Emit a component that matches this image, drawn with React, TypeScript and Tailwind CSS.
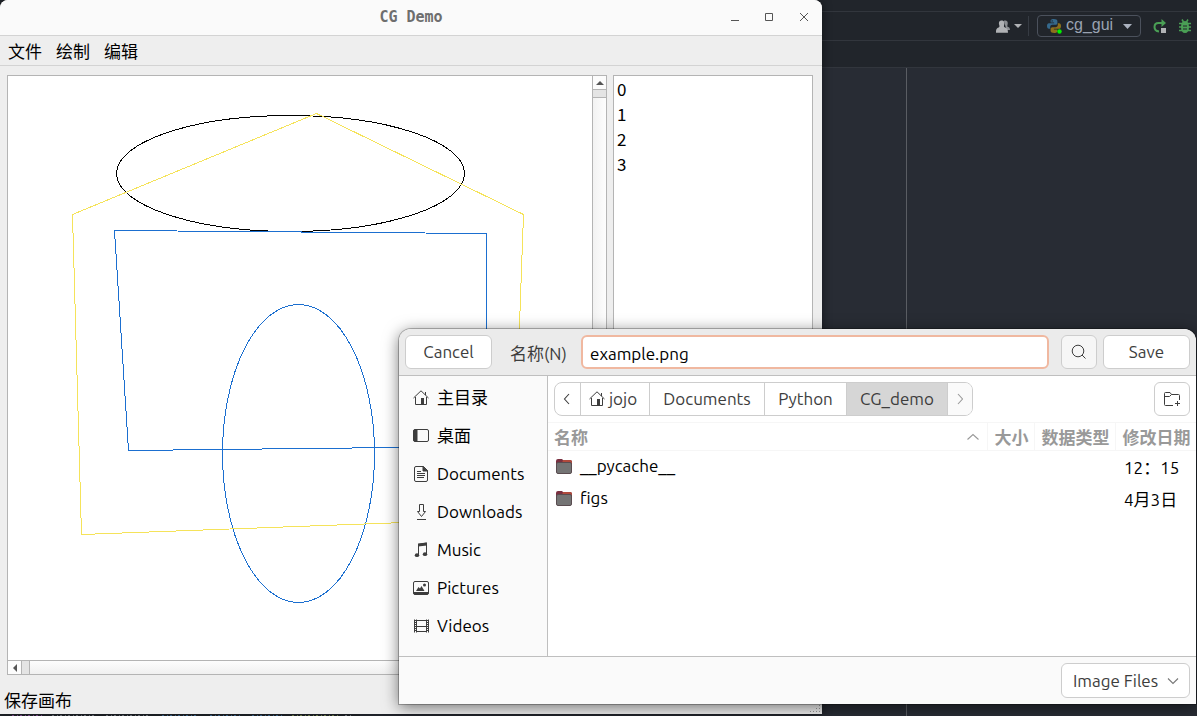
import React from "react";

const uiFont = "font-['Ubuntu','Noto_Sans','Noto_Sans_CJK_SC',sans-serif]";
const cjkFont = "font-['Noto_Sans_CJK_SC',sans-serif]";

const arrowPaths = {
  up: "M1.5 8.500 7 3.500l5.500 5",
  down: "M2 4.500 7 9.500l5-5",
  left: "M9 2 4.500 7 9 12",
  right: "M5 2 9.500 7 5 12",
};

function Arrow({ to }: { to: keyof typeof arrowPaths }) {
  return (
    <svg width="14" height="14" viewBox="0 0 14 14" fill="none" stroke="currentColor" strokeWidth="1.100" aria-hidden="true">
      <path d={arrowPaths[to]} />
    </svg>
  );
}

function HomeIcon() {
  return (
    <svg width="16" height="16" viewBox="0 0 16 16" fill="none" stroke="#3d3d3d" aria-hidden="true">
      <path d="M0.500 8 8 .8 15.500 8" />
      <path d="M2.500 7v7.500h11V7M12.500 5V2" />
      <path d="M8 8h3v6.500H8z" fill="#3d3d3d" stroke="none" />
    </svg>
  );
}

function DesktopIcon() {
  return (
    <svg width="16" height="16" viewBox="0 0 16 16" fill="none" stroke="#3d3d3d" aria-hidden="true">
      <rect x="0.5" y="1.5" width="15" height="12" rx="1.5" />
      <path d="M1 2h3v11H1z" fill="#3d3d3d" />
    </svg>
  );
}

function DocumentIcon() {
  return (
    <svg width="16" height="16" viewBox="0 0 16 16" fill="none" stroke="#3d3d3d" aria-hidden="true">
      <path d="M3 0.5h7.5l4 4V14a1.500 1.500 0 0 1-1.500 1.500H3A1.500 1.500 0 0 1 1.500 14V2A1.500 1.500 0 0 1 3 .5z" />
      <path d="M10 0.500v4.500h4.500z" fill="#3d3d3d" />
      <path d="M4 5.500h4M4 7.500h8M4 9.500h8M4 11.500h7" />
    </svg>
  );
}

function DownloadIcon() {
  return (
    <svg width="16" height="16" viewBox="0 0 16 16" fill="none" stroke="#3d3d3d" aria-hidden="true">
      <path d="M6.500 0.500h4V7.500h2L8.500 12.500 4.500 7.500h2zM4 15.500h9" />
    </svg>
  );
}

function MusicIcon() {
  return (
    <svg width="16" height="16" viewBox="0 0 16 16" fill="none" stroke="#3d3d3d" aria-hidden="true">
      <path d="M5.500 13V2.500l8-1.500v11" />
      <path d="M5 1.500 14 .5v3L5 4.500z" fill="#3d3d3d" stroke="none" />
      <ellipse cx="4" cy="13.200" rx="2.200" ry="1.900" fill="#3d3d3d" stroke="none" />
      <ellipse cx="12" cy="12.200" rx="2.200" ry="1.900" fill="#3d3d3d" stroke="none" />
    </svg>
  );
}

function PictureIcon() {
  return (
    <svg width="16" height="16" viewBox="0 0 16 16" fill="none" stroke="#3d3d3d" aria-hidden="true">
      <rect x="0.5" y="1.500" width="15" height="13" rx="1.500" />
      <path d="M1 12.500h14V14H1z" fill="#3d3d3d" />
      <path d="M3 11l2.500-4 1.500 1.500L8.500 6l3 5z" fill="#3d3d3d" stroke="none" />
      <circle cx="11.500" cy="5" r="1.500" fill="#3d3d3d" stroke="none" />
    </svg>
  );
}

function VideoIcon() {
  return (
    <svg width="16" height="16" viewBox="0 0 16 16" fill="none" stroke="#3d3d3d" aria-hidden="true">
      <path d="M1.500 1.500v13M3.500 1.500v13M13.500 1.500v13M15.500 1.500v13M3.500 2.500h10M3.500 8.500h10M3.500 13.500h10" />
      <path d="M2.500 2v12M14.500 2v12" strokeDasharray="1 1" />
    </svg>
  );
}

function FolderIcon() {
  return (
    <svg width="16" height="16" viewBox="0 0 16 16" aria-hidden="true">
      <path d="M0 3Q0 1 2 1h4l1 1h7q2 0 2 2v5H0z" fill="#7a3040" />
      <path d="M7 2h7q2 0 2 2v1H6z" fill="#b04a3c" />
      <rect x="0.500" y="4.500" width="15" height="11" rx="1.500" fill="#747474" stroke="#5a4c50" />
    </svg>
  );
}

function FolderPlusIcon() {
  return (
    <svg width="18" height="18" viewBox="0 0 18 18" fill="none" stroke="#3d3d3d" aria-hidden="true">
      <path d="M10 15.500H2.500q-1 0-1-1v-11q0-1 1-1h4.500l1.500 2h7q1 0 1 1V10M1.500 6.500h5l2-2" />
      <path d="M14.500 11v5M12 13.500h5" />
    </svg>
  );
}

function PythonIcon() {
  return (
    <svg width="16" height="16" viewBox="0 0 16 16" aria-hidden="true">
      <path d="M7.700 1C4.800 1 4.600 2.200 4.600 3v1.600h3.500v.6H3C1.400 5.200 1 6.700 1 8.100c0 1.500.6 2.700 2 2.700h1.200V9c0-1.300 1-2.200 2.200-2.200h3.200c1 0 1.800-.8 1.800-1.800V3c0-1.300-1.300-2-3.700-2z" fill="#35698c" />
      <path d="M8.300 15c2.900 0 3.100-1.200 3.100-2v-1.600H7.900v-.6H13c1.600 0 2-1.500 2-2.900 0-1.500-.6-2.700-2-2.700h-1.200V7c0 1.300-1 2.200-2.200 2.200H6.400c-1 0-1.800.8-1.800 1.800v2c0 1.300 1.300 2 3.700 2z" fill="#8d701c" />
      <circle cx="6.200" cy="2.900" r=".7" fill="#21252b" />
      <circle cx="13.500" cy="13.500" r="2.200" fill="#00f000" />
    </svg>
  );
}

function IdeBackground() {
  return (
    <div className="flex h-full flex-col bg-[#282c34]">
      <div className="h-3 shrink-0 border-b border-[#32363d] bg-[#21252b]" />
      <div className="flex h-[29px] shrink-0 items-center justify-end border-b border-[#32363d] bg-[#21252b] pr-1.5">
        <button type="button" aria-label="Users" className="flex items-center gap-1">
          <svg width="14" height="13" viewBox="0 0 16 14" fill="#b0b2b5" aria-hidden="true">
            <path d="M9 0.500c3.500-1 5 1 4.200 4.300-.4 1.800-.3 2.500.6 2.900 1.300.5 2.200 1 2.200 3.300h-4z" fill="#8d9094" />
            <path d="M6.500 0c3 0 3.600 2.500 2.900 5-.5 1.700-.6 2.600.9 3.200 2 .8 3.400 1.700 3.400 5.800H0c0-4.100 1-5 3-5.800 1.200-.6 1.200-1.500.6-3.200C2.900 2.500 3.500 0 6.500 0z" />
          </svg>
          <svg width="8" height="4" viewBox="0 0 8 4" fill="#b0b2b5" aria-hidden="true"><path d="M0 0h8L4 4z" /></svg>
        </button>
        <div className="ml-1.5 h-5 border-l border-[#363b43]" />
        <button type="button" className="ml-2 flex h-[22px] w-[104px] items-center rounded border border-[#4b515c] pl-2 font-['Liberation_Sans',sans-serif] text-base text-[#9aa3b2]">
          <PythonIcon />
          <span className="ml-1 pb-0.5 leading-4">cg_gui</span>
          <svg className="ml-2.5" width="9" height="5" viewBox="0 0 9 5" fill="#abb2bf" aria-hidden="true"><path d="M0 0h9L4.500 5z" /></svg>
        </button>
        <button type="button" aria-label="Rerun" className="ml-3">
          <svg width="14" height="14" viewBox="0 0 14 14" fill="none" aria-hidden="true">
            <path d="M6 12.500C2 12 1.500 9 1.500 8c0-2.500 1.500-4 4-4H10" stroke="#4a9f55" strokeWidth="2" />
            <path d="M8.500 0 13 4 8.500 8z" fill="#4a9f55" />
            <path d="M8 9h5v5H8z" fill="#b0b2b5" />
          </svg>
        </button>
        <button type="button" aria-label="Debug" className="ml-3">
          <svg width="12" height="14" viewBox="0 0 12 14" fill="none" aria-hidden="true">
            <path d="M3 .5 4.500 3M9 .5 7.500 3M0 4.500h3M12 4.500H9M0 8h12M0 11.500h3M12 11.500H9" stroke="#4a9f55" strokeWidth="1.500" />
            <path d="M6 2C3.500 2 2 4 2 8s1.500 6 4 6 4-2 4-6-1.500-6-4-6z" fill="#4a9f55" />
            <path d="M4 7h4M4 10h4" stroke="#21252b" />
          </svg>
        </button>
      </div>
      <div className="h-[27px] shrink-0 border-b border-[#32363d] bg-[#21252b]" />
      <div className="flex grow items-end justify-between">
        <svg width="360" height="2" strokeWidth="1" strokeDasharray="2 3 1 2" aria-hidden="true">
          <path d="M0 0h822v2H0z" fill="#21252b" />
          <path d="M12 1.500h30" stroke="#8a4f9c" />
          <path d="M52 1.500h45M106 1.500h45M345 1.500h6" stroke="#7d828b" />
          <path d="M162 1.500h36M210 1.500h32M252 1.500h30" stroke="#3f6f9c" />
          <path d="M292 1.500h48" stroke="#7c8a52" />
        </svg>
        <div className="h-full w-[291px] border-l border-[#5a5d63]" />
      </div>
    </div>
  );
}

function Drawing() {
  return (
    <svg className="block h-full w-full" fill="none" shapeRendering="crispEdges" role="img" aria-label="Canvas">
      <ellipse cx="282.500" cy="97.500" rx="174" ry="58" stroke="#000" />
      <path d="M106.500 154.500l372 3v213L120.500 374.500z" stroke="#1b6fd0" />
      <ellipse cx="290.500" cy="377.500" rx="76" ry="149" stroke="#1b6fd0" />
      <path d="M64.500 138.500l244-101 207 101-11 304-431 16z" stroke="#f5e35a" />
    </svg>
  );
}

function MainWindow() {
  return (
    <section className={`absolute top-0 right-[375px] bottom-0.5 left-0 flex flex-col overflow-hidden rounded-t-lg bg-[#eeeeee] shadow-[0_0_10px_rgba(0,0,0,0.5)] ${cjkFont}`}>
      <header className="grid h-9 shrink-0 grid-cols-[1fr_auto_1fr] items-center border-b border-[#d3d3d3] bg-[#fafafa]">
        <h1 className="col-start-2 font-['DejaVu_Sans_Mono',monospace] text-[15px] font-bold text-[#6e6e6e]">CG Demo</h1>
        <div className="flex justify-end gap-6 pr-3">
          <button type="button" aria-label="Minimize">
            <svg width="10" height="10" stroke="#555" aria-hidden="true"><path d="M1 7.500h8" /></svg>
          </button>
          <button type="button" aria-label="Maximize">
            <svg width="10" height="10" fill="none" stroke="#555" aria-hidden="true"><path d="M1.500 .5h7v7h-7z" /></svg>
          </button>
          <button type="button" aria-label="Close">
            <svg width="12" height="10" stroke="#555" aria-hidden="true"><path d="M2 0l8 8M10 0 2 8" /></svg>
          </button>
        </div>
      </header>
      <nav className="flex h-[30px] shrink-0 items-center gap-3.5 border-b border-[#d3d3d3] px-2 text-[17px] text-black">
        <button type="button">文件</button>
        <button type="button">绘制</button>
        <button type="button">编辑</button>
      </nav>
      <div className="flex min-h-0 grow gap-1.5 pt-[9px] pr-[9px] pl-[7px]">
        <div className="grid min-w-0 grow grid-cols-[1fr_14px] grid-rows-[1fr_14px] border border-[#b4b4b4] bg-white">
          <Drawing />
          <div className="flex flex-col border-l border-[#b4b4b4] bg-linear-to-r from-[#f2f2f2] to-[#fdfdfd]">
            <button type="button" aria-label="Scroll up" className="flex h-3.5 items-center justify-center border-b border-[#b4b4b4] bg-[#fcfcfc]">
              <svg width="8" height="4" fill="#555" aria-hidden="true"><path d="M4 0l4 4H0z" /></svg>
            </button>
            <div className="h-2 border-b border-[#b4b4b4] bg-[#e4e4e4]" />
          </div>
          <div className="col-span-2 flex border-t border-[#b4b4b4] bg-linear-to-b from-[#fdfdfd] to-[#f0f0f0]">
            <button type="button" aria-label="Scroll left" className="flex w-3.5 items-center justify-center border-r border-[#b4b4b4] bg-[#fcfcfc]">
              <svg width="4" height="8" fill="#555" aria-hidden="true"><path d="M0 4l4-4v8z" /></svg>
            </button>
            <div className="w-2 border-r border-[#b4b4b4] bg-[#e4e4e4]" />
          </div>
        </div>
        <ul className="w-[200px] shrink-0 border border-[#b4b4b4] bg-white px-[3px] text-[17px] leading-[25px] text-black">
          <li>0</li>
          <li>1</li>
          <li>2</li>
          <li>3</li>
        </ul>
      </div>
      <footer className="flex h-[39px] shrink-0 items-end justify-between pl-1 text-[17px] text-black">
        <span className="leading-[29px]">保存画布</span>
        <svg width="12" height="10" stroke="#999" strokeDasharray="1 2" aria-hidden="true"><path d="M9 1.500h3M6 4.500h6M0 7.500h12" /></svg>
      </footer>
    </section>
  );
}

const places = [
  { label: "主目录", icon: <HomeIcon /> },
  { label: "桌面", icon: <DesktopIcon /> },
  { label: "Documents", icon: <DocumentIcon /> },
  { label: "Downloads", icon: <DownloadIcon /> },
  { label: "Music", icon: <MusicIcon /> },
  { label: "Pictures", icon: <PictureIcon /> },
  { label: "Videos", icon: <VideoIcon /> },
];

const files = [
  { name: "__pycache__", date: "12：15" },
  { name: "figs", date: "4月3日" },
];

function SaveDialog() {
  return (
    <section
      role="dialog"
      aria-label="Save"
      className={`absolute top-[329px] right-px bottom-3 left-[399px] flex flex-col overflow-hidden rounded-t-xl bg-[#fafafa] text-[17px] text-black shadow-[0_0_0_1px_rgba(0,0,0,0.25),0_3px_16px_rgba(0,0,0,0.55)] ${uiFont}`}
    >
      <header className="flex h-[47px] shrink-0 items-center border-b border-[#bfbfbf] bg-[#ebebeb] px-1.5 text-[#3d3d3d]">
        <button type="button" className="h-[34px] w-[87px] rounded-md border border-[#cdcdcd] bg-white">Cancel</button>
        <label htmlFor="file-name" className="ml-[18px] w-[71px] pt-1 whitespace-nowrap">名称(N)</label>
        <input id="file-name" defaultValue="example.png" className="h-[34px] min-w-0 grow rounded-md border-2 border-[#f0b8a0] bg-white px-[7px] pt-0.5 text-black outline-none" />
        <button type="button" aria-label="Search" className="ml-3 flex h-[34px] w-9 items-center justify-center rounded-md border border-[#cdcdcd] bg-[#f6f6f6]">
          <svg width="16" height="16" viewBox="0 0 16 16" fill="none" stroke="#3d3d3d" aria-hidden="true"><circle cx="7" cy="7" r="5.800" /><path d="M11 11l3.500 3.500" /></svg>
        </button>
        <button type="button" className="ml-1.5 h-[34px] w-[87px] rounded-md border border-[#cdcdcd] bg-white">Save</button>
      </header>
      <div className="flex min-h-0 grow">
        <nav className="w-[149px] shrink-0 border-r border-[#bfbfbf] pt-[3px]">
          {places.map((place) => (
            <a key={place.label} href="#" className="flex h-[38px] items-center gap-2 pl-3.5">
              {place.icon}
              <span>{place.label}</span>
            </a>
          ))}
        </nav>
        <div className="min-w-0 grow bg-white">
          <div className="flex h-[46px] items-center justify-between px-1.5 text-[#3d3d3d]">
            <div className="flex h-[34px] overflow-hidden rounded-lg border border-[#cdcdcd] bg-white">
              <button type="button" aria-label="Back" className="flex w-[26px] items-center justify-center border-r border-[#cdcdcd] pr-0.5"><Arrow to="left" /></button>
              <button type="button" className="flex w-[69px] items-center justify-center gap-1 border-r border-[#cdcdcd] pr-1"><HomeIcon />jojo</button>
              <button type="button" className="w-[115px] border-r border-[#cdcdcd]">Documents</button>
              <button type="button" className="w-[82px] border-r border-[#cdcdcd]">Python</button>
              <button type="button" className="w-[101px] border-r border-[#cdcdcd] bg-[#d6d6d6]">CG_demo</button>
              <button type="button" aria-label="Forward" className="flex w-6 items-center justify-center bg-[#fafafa] text-[#999]"><Arrow to="right" /></button>
            </div>
            <button type="button" aria-label="New folder" className="flex h-[34px] w-9 items-center justify-center rounded-md border border-[#cdcdcd]"><FolderPlusIcon /></button>
          </div>
          <table className="w-full table-fixed border-collapse text-left">
            <colgroup>
              <col />
              <col className="w-[47px]" />
              <col className="w-[81px]" />
              <col className="w-[81px]" />
            </colgroup>
            <thead>
              <tr className="h-7 border-y border-[#f6f6f6] leading-6 whitespace-nowrap text-[#999]">
                <th scope="col" className="p-0 pt-0.5 pl-1.5">
                  <span className="flex items-center justify-between pr-[7px]">名称<Arrow to="up" /></span>
                </th>
                <th scope="col" className="border-l border-[#f6f6f6] p-0 pt-0.5 pl-[7px]">大小</th>
                <th scope="col" className="border-l border-[#f6f6f6] p-0 pt-0.5 pl-[7px]">数据类型</th>
                <th scope="col" className="border-l border-[#f6f6f6] p-0 pt-0.5 pl-[7px]">修改日期</th>
              </tr>
            </thead>
            <tbody>
              {files.map((file) => (
                <tr key={file.name} className="h-8">
                  <td className="p-0 pb-0.5 pl-2"><span className="flex items-center gap-2"><FolderIcon />{file.name}</span></td>
                  <td className="p-0" />
                  <td className="p-0" />
                  <td className="p-0 pt-0.5 pl-[9px] whitespace-nowrap">{file.date}</td>
                </tr>
              ))}
            </tbody>
          </table>
        </div>
      </div>
      <footer className="flex h-12 shrink-0 items-center justify-end border-t border-[#bfbfbf] px-1.5 text-[#3d3d3d]">
        <label className="relative flex items-center">
          <select aria-label="File type" className="h-[35px] w-[129px] appearance-none rounded-md border border-[#cdcdcd] bg-white pl-[11px]">
            <option>Image Files</option>
          </select>
          <span className="pointer-events-none absolute right-2.5 text-[#777]"><Arrow to="down" /></span>
        </label>
      </footer>
    </section>
  );
}

export default function App() {
  return (
    <main className="relative h-screen w-full overflow-hidden">
      <IdeBackground />
      <MainWindow />
      <SaveDialog />
    </main>
  );
}
